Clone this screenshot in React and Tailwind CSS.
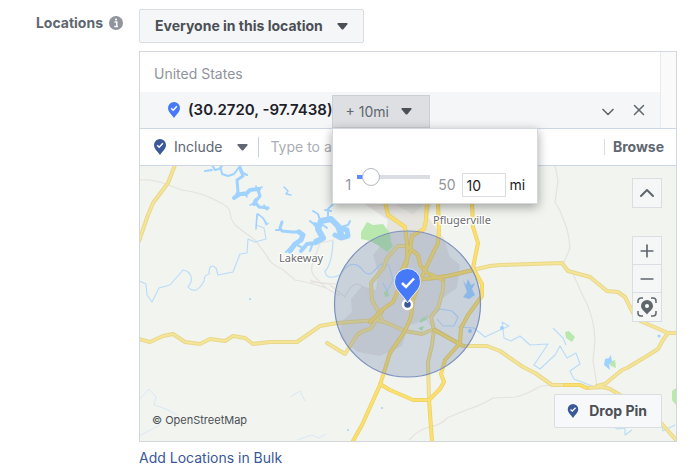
import { useState } from 'react'
import { ChevronDown, ChevronUp, Minus, Plus, X } from 'lucide-react'

const MINOR_ROADS = [
  'M139 180 Q148 179 160 182 L182 190 Q203 193 215 200 Q231 207 230 213 Q231 223 240 229 L255 240 L267 256 Q270 264 282 269 L295 280 Q302 281 313 284 L326 288 L340 296',
  'M334 240 L320 243 L314 260 Q308 272 317 279 L326 288 M310 282 L336 284',
  'M310 280 Q318 283 329 284 Q336 290 345 297 Q353 279 362 286 L372 298',
  'M362 286 Q368 302 380 310 M384 309 Q396 296 405 298 M411 305 L425 316 L434 330',
  'M555 165 L558 181 L555 202 Q561 211 564 221 Q569 232 570 248 L564 262',
  'M573 274 L583 296 Q594 315 595 340 L593 361 L597 386',
  'M409 440 Q420 428 430 427 Q441 425 447 418 L466 410 Q480 406 493 398 L516 397 Q525 395 541 386 L552 385',
]

const LIGHT_ROADS = [
  'M175 165 L168 183 L153 203 L148 215 L139 241',
  'M139 339 L150 342 L163 336 L173 334 L185 342 L200 344 L210 339 L225 341 L233 336 L245 338 L253 344 L270 342 L297 342 L310 333 L320 326 L337 323 L377 320 L387 323 L405 331 L422 334 L434 329 L463 346 L487 346 L500 351 L523 367 L535 373 L552 385 L580 385 L587 388 L603 387 L610 389 L637 405 L662 424 L676 440',
  'M597 386 L605 384 L622 370 L627 368 L647 356 L658 349 L663 340 L668 333 L677 333',
  'M428 279 L453 275 L473 270 L490 266 L500 265 L562 263 L568 271 L590 277 L607 291 L618 292 L625 297 L633 313 L638 320 L668 333',
  'M327 343 L345 354 L357 335 L363 331 L370 329 L382 312',
  'M407 246 L398 246 L387 258 L384 267 L371 283 L372 300 L378 311 L383 322',
  'M443 280 L443 290 L438 308 L431 317 L434 330 L432 345 L428 362 L429 400',
]

const MAIN_ROADS = [
  'M385 202 L388 215 L405 227 L407 243 L407 262 L397 293 L393 302 L382 310 L370 322',
  'M427 202 L426 220 L424 229 L412 236 L410 252 L402 270',
  'M438 202 L439 230 L438 243 L423 274 L413 300 L411 317 L405 331 L390 353 L380 385 L362 425 L353 441',
  'M472 202 L473 227 L478 243 L473 268 L482 284 L482 296 L468 315 L461 328 L460 343 L445 360 L441 374 L444 382 L440 389 L429 400 L432 441',
  'M407 246 L418 255 L420 265 L427 273 L443 280 M424 279 L448 276 L473 270',
  'M380 384 L390 390 L413 400 L429 400',
  'M434 330 L463 346',
  'M565 385 L580 385 L587 388',
]

const STREAMS = [
  'M139 281 L146 284 L147 295 L152 302 L159 288 L170 285 L183 270 Q193 272 191 282 L188 287 Q196 296 204 281 Q204 275 209 274 Q209 262 216 268 L218 275 L233 272 L240 254 L247 253 L248 239 L255 242 L266 239 L264 228 L256 225 L258 214 L263 218 L266 225 L269 223',
  'M333 241 Q332 265 325 271 Q326 281 340 275 Q351 258 361 268 Q368 278 374 271 L381 264 L389 265 L393 280 L387 291 L383 283',
  'M430 318 L440 309 L452 311 L458 317 L454 326 L443 326 L437 319 M458 327 L474 328 L485 337 L500 330 L509 326 L502 322 L504 338 L511 341 L520 336 L530 345 L548 344 L534 365 L540 369 L555 355 L560 346 L567 358 L576 353 L580 364 L570 371 L574 379 L592 386',
  'M608 425 L618 429 L625 428 L625 435 L632 430 M660 418 L663 431 L675 425 M553 328 L563 338 L566 345',
]

const LAKES = [
  // river arm in the north west
  { d: 'M205 171 L212 170 M212 165 L215 170 L219 169 L222 166 M221 169 L222 174 L228 176 L234 174 L240 166 M240 166 L243 173 L247 175', w: 2 },
  { d: 'M240 169 L243 176 L237 180 L238 192 L236 196 M258 190 L260 196 L255 202 L259 207 L268 208', w: 3 },
  { d: 'M234 198 L240 194 L246 194 L250 190 L259 189 M256 200 L254 204', w: 4 },
  { d: 'M256 186 L257 190 L262 187 M250 205 L256 203 M264 205 L267 210 M247 197 L244 192 M258 214 L263 218 L267 224 M257 214 L256 229', w: 1.5 },
  // lake south west of the city
  { d: 'M282 222 L280 228 L282 231 L292 232 L300 232', w: 3 },
  { d: 'M299 232 L303 235 L301 240 L295 244 L290 251 M316 241 L323 238', w: 5 },
  { d: 'M301 251 L307 244 L316 243 L323 239 L319 229 L315 224', w: 4 },
  { d: 'M323 238 L318 229 L321 221 L331 219 L338 226 L342 237', w: 6 },
  { d: 'M335 235 L341 238 L348 236 L347 230 L340 228', w: 5 },
  { d: 'M328 219 L328 209 L333 204 M320 220 L318 214 L313 211 M341 227 L348 225 L350 221 M310 221 L315 225 M313 243 L310 251 M286 252 L292 246 M276 230 L281 230 M297 245 L301 247 M325 210 L331 211 M323 225 L327 228', w: 2 },
  { d: 'M284 187 L288 191 L286 194 L291 195', w: 1.5 },
]

const BOX_BUTTON = 'flex h-7 w-7 items-center justify-center bg-[#f5f7f7] text-[#5f676d]'

function PinIcon({ className }) {
  return (
    <svg viewBox="0 0 12 16" className={className} aria-hidden="true">
      <path d="M6 0a6 6 0 0 1 6 6c0 3.8-3.2 6-6 10C3.2 12 0 9.8 0 6a6 6 0 0 1 6-6z" fill="currentColor" />
      <path d="M3.2 6.2l2 2 3.7-3.9" fill="none" stroke="#fff" strokeWidth="1.5" />
    </svg>
  )
}

function Caret({ className }) {
  return (
    <svg viewBox="0 0 12 8" className={className} aria-hidden="true">
      <path d="M1 0h10q1.5 0 .6 1.3L7 7q-1 1-2 0L.4 1.3Q-.5 0 1 0z" fill="currentColor" />
    </svg>
  )
}

function MapCanvas() {
  return (
    <svg
      viewBox="140 166 536 275"
      preserveAspectRatio="xMidYMid slice"
      className="block h-full w-full"
      role="img"
      aria-label="Map of Austin"
    >
      <rect x="140" y="166" width="536" height="275" fill="#f1f4ef" />

      {/* built-up areas */}
      <g fill="#e5e4df">
        <path d="M362 202 L432 202 L428 217 L445 240 L449 256 L460 265 L457 288 L440 300 L430 318 L408 326 L402 346 L380 356 L358 352 L340 338 L341 322 L352 312 L351 299 L362 286 L376 290 L378 272 L373 255 L385 240 L388 220z" />
        <path d="M394 203 L425 203 L413 215z" fill="#dcdcd7" />
      </g>

      {/* parks */}
      <g fill="#b9e8ae">
        <path d="M361 232 L367 222 L373 225 L383 224 L390 233 L391 242 L393 246 L387 252 L379 246 L370 241 L361 239z" />
        <path d="M420 320 L427 315 L428 319 L420 323z M418 328 L424 326 L422 331z M384 292 L388 291 L389 296 L385 297z" />
        <path d="M565 332 L569 331 L575 337 L572 342 L566 338z M608 362 L615 360 L616 368 L611 366z M672 391 L676 388 V405 L672 400z" />
      </g>

      <g fill="none" stroke="#e6e2de" strokeWidth="1.2">
        {MINOR_ROADS.map(d => <path key={d} d={d} />)}
      </g>
      <g fill="none" stroke="#b9dbfa" strokeWidth="1.1" strokeLinejoin="round">
        {STREAMS.map(d => <path key={d} d={d} />)}
      </g>
      <g fill="none" stroke="#a0d2ff" strokeLinejoin="round" strokeLinecap="round">
        {LAKES.map(l => <path key={l.d} d={l.d} strokeWidth={l.w} />)}
      </g>
      <g fill="#a0d2ff">
        <path d="M463 280 L466 285 L468 279 L471 285 L475 283 L472 289 L475 295 L469 299 L463 297 L467 292z" />
        <path d="M605 359 L609 358 L611 355 L612 362 L609 364 L610 370 L604 365z" />
        <circle cx="502" cy="328" r="2" />
        <circle cx="659" cy="336" r="1.5" />
        <circle cx="470" cy="331" r="2" />
        <circle cx="382" cy="408" r="1" />
        <circle cx="348" cy="430" r="1" />
        <circle cx="250" cy="299" r="1" />
      </g>
      <g fill="none" stroke="#d9e8f5" strokeWidth="1">
        <path d="M139 400 L149 389 L156 397 L154 405 L166 409 L177 415 M139 436 L160 425 M297 440 L312 435 L319 438 L326 434 M290 397 L300 391 L305 401" />
      </g>

      <g fill="none" strokeLinejoin="round" strokeLinecap="round">
        <g stroke="#e9d78c" strokeWidth="4">
          {LIGHT_ROADS.map(d => <path key={d} d={d} />)}
        </g>
        <g stroke="#f5e596" strokeWidth="2">
          {LIGHT_ROADS.map(d => <path key={d} d={d} />)}
        </g>
        <g stroke="#eed064" strokeWidth="4">
          {MAIN_ROADS.map(d => <path key={d} d={d} />)}
        </g>
        <g stroke="#fce06f" strokeWidth="2.5">
          {MAIN_ROADS.map(d => <path key={d} d={d} />)}
        </g>
      </g>

      <g
        className="font-['Noto_Sans','Open_Sans',sans-serif] text-[11px]"
        fill="#6d6d6d"
        stroke="#fff"
        strokeWidth="2.5"
        strokeLinejoin="round"
        paintOrder="stroke"
      >
        <text x="279" y="262">Lakeway</text>
        <text x="433" y="224">Pflugerville</text>
      </g>

      {/* targeting radius */}
      <circle cx="407.5" cy="304" r="73" fill="#3b5998" fillOpacity="0.22" stroke="#7d90bd" strokeWidth="1.2" />
      <circle cx="407.5" cy="304.5" r="4.5" fill="#3b5998" stroke="#fff" strokeWidth="2.5" />
      <path
        d="M407.5 268.5a13 13 0 0 1 13 13c0 8.5-8 12.5-13 21.5-5-9-13-13-13-21.5a13 13 0 0 1 13-13z"
        fill="#4579f7"
        stroke="#fff"
        strokeOpacity="0.8"
      />
      <path d="M402 283l4 4 8-8.5" fill="none" stroke="#fff" strokeWidth="2.5" />
    </svg>
  )
}

function RadiusMenu({ radius, setRadius }) {
  const fill = ((radius - 1) / 49) * 100

  return (
    <div className="absolute top-full left-0 z-20 flex h-[76px] w-[206px] items-end border border-[#d5d8dc] bg-white px-3 pb-1.5 shadow-[0_3px_10px_rgba(0,0,0,0.35)]">
      <span className="flex h-6 items-center text-[14px] text-[#90949c]">1</span>
      <div className="relative mb-3 ml-1.5 flex h-4 w-[73px] items-center">
        <div className="h-1 w-full bg-[#dadde1]">
          <div className="h-1 bg-[#5b8cff]" style={{ width: `${fill}%` }} />
        </div>
        <input
          type="range"
          min="1"
          max="50"
          value={radius}
          onChange={e => setRadius(Number(e.target.value))}
          aria-label="Radius"
          className="absolute inset-y-0 -left-1.5 w-[79px] appearance-none bg-transparent [&::-webkit-slider-thumb]:h-[18px] [&::-webkit-slider-thumb]:w-[18px] [&::-webkit-slider-thumb]:appearance-none [&::-webkit-slider-thumb]:rounded-full [&::-webkit-slider-thumb]:border [&::-webkit-slider-thumb]:border-[#b4b8bf] [&::-webkit-slider-thumb]:bg-white"
        />
      </div>
      <span className="ml-2 flex h-6 items-center text-[14px] text-[#90949c]">50</span>
      <label className="ml-1.5 flex items-center gap-1 text-[14px] text-[#1d2129]">
        <input
          type="text"
          value={radius}
          onChange={e => setRadius(Number(e.target.value) || 1)}
          className="h-6 w-11 border border-[#dadde1] bg-white px-1 text-[14px] text-[#1d2129]"
        />
        mi
      </label>
    </div>
  )
}

export default function App() {
  const [radius, setRadius] = useState(10)
  const [open, setOpen] = useState(true)

  return (
    <div className="flex bg-white pt-[9px] pr-[23px] font-[Inter,'Liberation_Sans',sans-serif] text-[14px] leading-5">
      <div className="flex h-7 w-[139px] shrink-0 items-center justify-end gap-1.5 pr-4 font-bold text-[#606770]">
        Locations
        <svg viewBox="0 0 14 14" className="h-3.5 w-3.5" aria-hidden="true">
          <circle cx="7" cy="7" r="7" fill="#90949c" />
          <path d="M5.5 6h2.3v4M5.3 10.5h3.6" fill="none" stroke="#fff" strokeWidth="1.5" />
          <circle cx="7" cy="3.5" r="1.1" fill="#fff" />
        </svg>
      </div>

      <div className="min-w-0 flex-1">
        <button className="flex h-[34px] items-center gap-3.5 rounded-xs border border-[#dadde1] bg-[#f5f6f7] px-[15px] font-bold text-[#4b4f56]">
          Everyone in this location
          <Caret className="h-[7px] w-[11px]" />
        </button>

        <div className="mt-2 border border-[#d3d7dd]">
          {/* selected locations */}
          <div className="flex">
            <div className="min-w-0 flex-1">
              <div className="flex h-10 items-center px-[14px] pt-1 text-[#90949c]">United States</div>
              <div className="flex h-9 items-center bg-[#f5f6f7] pr-3 pl-7">
                <PinIcon className="mr-2 h-4 w-3 text-[#4579f7]" />
                <span className="text-[15px] font-semibold text-[#1d2129]">(30.2720, -97.7438)</span>
                <div className="relative self-end">
                  <button
                    onClick={() => setOpen(!open)}
                    className="flex h-[33px] w-[98px] items-center gap-3 border border-[#ccd0d5] bg-[#dddfe2] pl-3 text-[#606770]"
                  >
                    + {radius}mi
                    <Caret className="h-[7px] w-[11px] text-[#4b4f56]" />
                  </button>
                  {open && <RadiusMenu radius={radius} setRadius={setRadius} />}
                </div>
                <button className="ml-auto pt-1 text-[#606770]" aria-label="More options">
                  <ChevronDown size={20} />
                </button>
                <button className="ml-3 text-[#606770]" aria-label="Remove location">
                  <X size={18} strokeWidth={2} />
                </button>
              </div>
            </div>
            <div className="w-4 border-l border-[#e9ebee] bg-[#fafafa]" />
          </div>

          {/* search row */}
          <div className="flex h-[38px] items-center border-y border-[#cdd6e5] bg-white pr-3 pl-[14px]">
            <button className="flex items-center text-[#606770]">
              <PinIcon className="mr-2 h-4 w-3 text-[#3b5998]" />
              Include
              <Caret className="ml-[15px] h-[7px] w-[11px]" />
            </button>
            <input
              type="text"
              placeholder="Type to add more locations"
              aria-label="Add locations"
              className="ml-2.5 h-5 min-w-0 flex-1 border-l border-[#c3d0e5] pl-[11px] placeholder:text-[#a9adb4]"
            />
            <button className="h-4 border-l border-[#dadde1] pl-2 leading-4 font-bold text-[#606770]">Browse</button>
          </div>

          {/* map with its overlaid controls */}
          <div className="relative h-[275px] overflow-hidden">
            <MapCanvas />
            <div className="absolute top-3 right-[14px] border border-[#dadde1]">
              <button className={BOX_BUTTON} aria-label="Collapse map"><ChevronUp size={24} /></button>
            </div>
            <div className="absolute top-[70px] right-[14px] divide-y divide-[#dadde1] border border-[#dadde1]">
              <button className={BOX_BUTTON} aria-label="Zoom in"><Plus size={20} /></button>
              <button className={BOX_BUTTON} aria-label="Zoom out"><Minus size={20} /></button>
              <button className={BOX_BUTTON} aria-label="My location">
                <svg viewBox="0 0 20 20" className="h-5 w-5" fill="none" stroke="currentColor" strokeWidth="1.5">
                  <path d="M1 6V4a3 3 0 0 1 3-3h2M14 1h2a3 3 0 0 1 3 3v2M19 14v2a3 3 0 0 1-3 3h-2M6 19H4a3 3 0 0 1-3-3v-2" />
                  <path d="M10 3a6 6 0 0 1 6 6c0 3.5-3.5 5-6 8.5-2.5-3.5-6-5-6-8.5a6 6 0 0 1 6-6z" fill="currentColor" stroke="none" />
                  <circle cx="10" cy="9" r="2" fill="#fff" stroke="none" />
                </svg>
              </button>
            </div>
            <span className="absolute bottom-[13px] left-3 text-[11px] leading-4 text-[#4b4f56]">© OpenStreetMap</span>
            <button className="absolute right-[14px] bottom-[13px] flex h-[34px] items-center gap-2.5 rounded-xs border border-[#dadde1] bg-[#f7f8f9] pr-[14px] pl-3 font-bold text-[#4b4f56]">
              <PinIcon className="h-3.5 w-3 text-[#3b5998]" />
              Drop Pin
            </button>
          </div>
        </div>

        <a href="#bulk" className="mt-1.5 block w-fit text-[#385898]">Add Locations in Bulk</a>
      </div>
    </div>
  )
}
